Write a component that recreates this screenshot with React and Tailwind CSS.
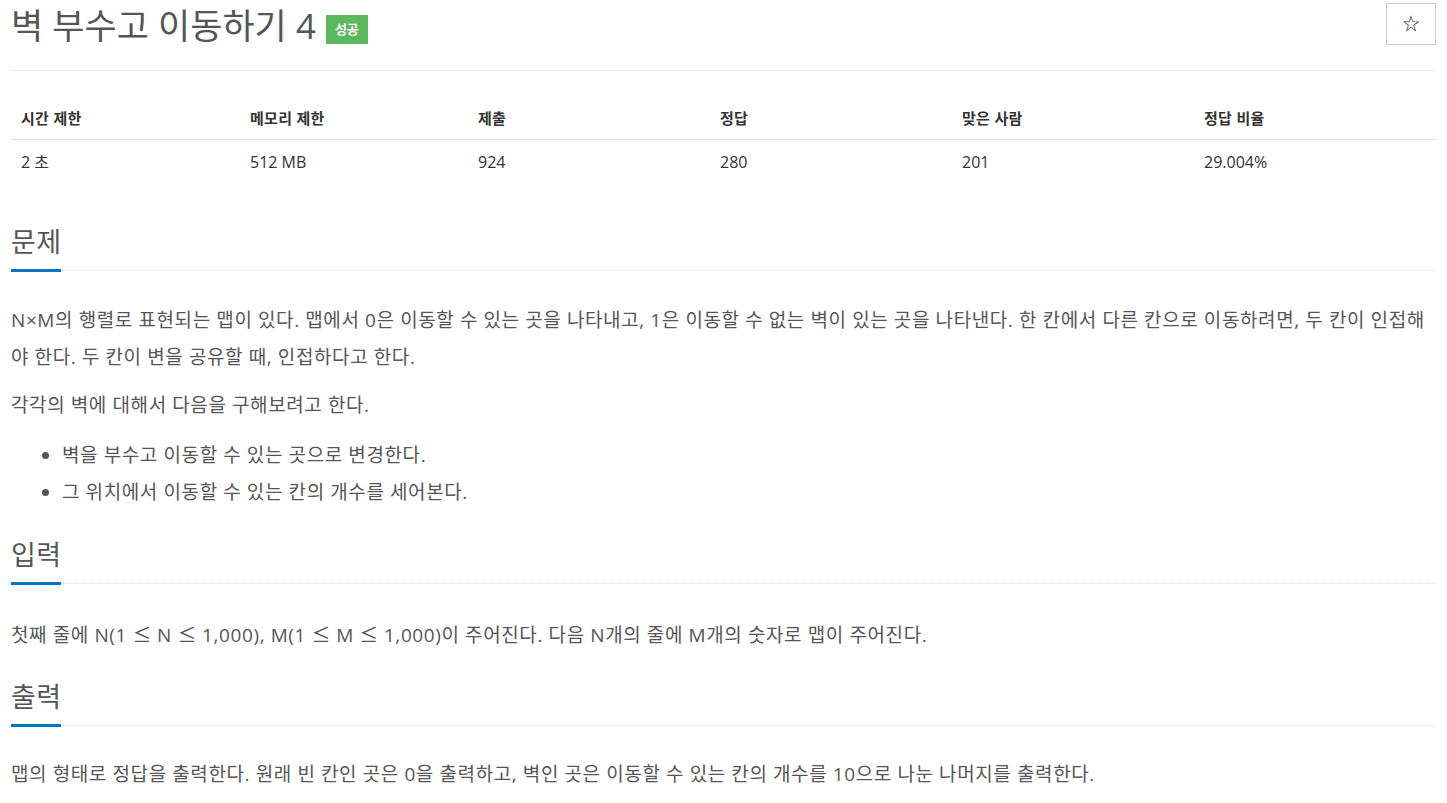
const FONT = 'font-["Open_Sans","Noto_Sans_CJK_KR",sans-serif]';

const STATS = [
  { label: '시간 제한', value: '2 초' },
  { label: '메모리 제한', value: '512 MB' },
  { label: '제출', value: '924' },
  { label: '정답', value: '280' },
  { label: '맞은 사람', value: '201' },
  { label: '정답 비율', value: '29.004%' },
];

function Le() {
  return <span className='font-["Noto_Sans_CJK_KR",sans-serif] tracking-normal'>≤</span>;
}

function Headline({ children }) {
  return (
    <div className="border-b border-dotted border-[#dddddd]">
      <h2 className="inline-block -mb-[2px] border-b-[3px] border-[#0076c0] text-[27px] tracking-[0.3px] leading-[36px] pb-[9px] text-[#555555]">
        {children}
      </h2>
    </div>
  );
}

export default function App() {
  return (
    <div className={`${FONT} bg-white min-h-[803px] px-[11px] text-[#555555]`}>
      {/* title row */}
      <div className="flex items-start justify-between">
        <div className="flex items-center gap-[10px] pt-[7px]">
          <h1 className="text-[35px] leading-[36px] text-[#555555]">벽 부수고 이동하기 4</h1>
          <span className="mt-[8px] bg-[#5cb85c] text-white text-[13px] font-bold leading-[29px] px-[9px]">
            성공
          </span>
        </div>
        <button className="mt-[3px] w-[50px] h-[42px] border border-[#cccccc] bg-white flex items-center justify-center text-[17px] text-[#222222]">
          ☆
        </button>
      </div>

      <div className="mt-[25px] border-t border-[#eeeeee]" />

      {/* stats table */}
      <div className="mt-[24px] grid grid-cols-[229px_228px_242px_242px_242px_1fr] text-[#333333]">
        {STATS.map((s) => (
          <div key={s.label} className="h-[45px] pt-[2px] flex items-center px-[10px] text-[15px] tracking-[0.3px] font-bold border-b border-[#dddddd]">
            {s.label}
          </div>
        ))}
        {STATS.map((s) => (
          <div key={s.label} className="h-[44px] flex items-center px-[10px] text-[16px]">
            {s.value}
          </div>
        ))}
      </div>

      {/* problem */}
      <section className="mt-[40px]">
        <Headline>문제</Headline>
        <div className="mt-[31px] text-[19px] tracking-[0.6px] leading-[37px]">
          <p>
            N×M의 행렬로 표현되는 맵이 있다. 맵에서 0은 이동할 수 있는 곳을 나타내고, 1은 이동할 수 없는 벽이 있는 곳을 나타낸다. 한 칸에서 다른 칸으로 이동하려면, 두 칸이 인접해야 한다. 두 칸이 변을 공유할 때, 인접하다고 한다.
          </p>
          <p className="mt-[11px]">각각의 벽에 대해서 다음을 구해보려고 한다.</p>
          <ul className="mt-[13px] pl-[51px] list-disc">
            <li>벽을 부수고 이동할 수 있는 곳으로 변경한다.</li>
            <li>그 위치에서 이동할 수 있는 칸의 개수를 세어본다.</li>
          </ul>
        </div>
      </section>

      {/* input */}
      <section className="mt-[26px]">
        <Headline>입력</Headline>
        <p className="mt-[31px] text-[19px] tracking-[0.6px] leading-[37px]">
          첫째 줄에 N(1 <Le /> N <Le /> 1,000), M(1 <Le /> M <Le /> 1,000)이 주어진다. 다음 N개의 줄에 M개의 숫자로 맵이 주어진다.
        </p>
      </section>

      {/* output */}
      <section className="mt-[25px]">
        <Headline>출력</Headline>
        <p className="mt-[30px] text-[19px] tracking-[0.6px] leading-[37px]">
          맵의 형태로 정답을 출력한다. 원래 빈 칸인 곳은 0을 출력하고, 벽인 곳은 이동할 수 있는 칸의 개수를 10으로 나눈 나머지를 출력한다.
        </p>
      </section>
    </div>
  );
}
